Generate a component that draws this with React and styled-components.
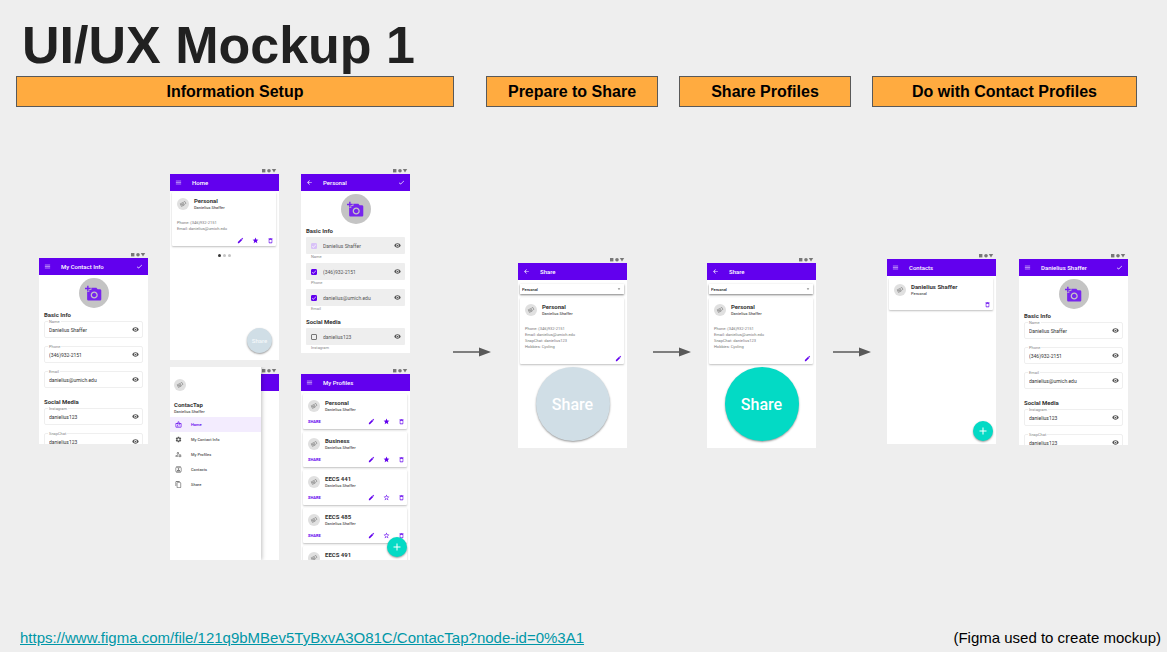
import React, { useId } from "react";
import styled, { createGlobalStyle, css } from "styled-components";
import {
  MdMenu, MdCheck, MdArrowBack, MdAddAPhoto, MdEdit, MdStar, MdStarBorder,
  MdDeleteOutline, MdVisibility, MdAdd, MdArrowDropDown, MdOutlineBadge,
  MdSettings, MdOutlineManageAccounts, MdOutlineContacts, MdContentCopy,
} from "react-icons/md";

const purple = "#6200ee";
const teal = "#03dac5";

const GlobalStyle = createGlobalStyle`
  * { box-sizing: border-box; }
  body { margin: 0; background: #eeeeee; }
  h1, h2, h3, p, ul { margin: 0; padding: 0; }
  button { font: inherit; color: inherit; background: none; border: 0; padding: 0; cursor: pointer; }
  svg { display: block; flex: none; }
`;

const Page = styled.main`
  min-height: 100vh;
  display: flex;
  flex-direction: column;
  background: #eeeeee;
  color: #000;
  font-family: "Liberation Sans", Arial, sans-serif;
`;

const Title = styled.h1`
  padding: 15px 22px 1px;
  font-size: 52px;
  line-height: 60px;
  font-weight: 700;
  color: #212121;
`;

const Stages = styled.div`
  display: grid;
  grid-template-columns: 449fr 172fr 172fr 265fr;
  column-gap: 21px;
  padding: 0 30px 0 16px;
`;

const Stage = styled.h2`
  margin-right: ${(p) => (p.$wide ? "11px" : "0")};
  border: 1px solid #595959;
  background: #ffab40;
  font-size: 16px;
  line-height: 29px;
  font-weight: 700;
  text-align: center;
  white-space: nowrap;
`;

const Board = styled.section`
  display: flex;
  align-items: flex-start;
  margin-top: 60px;
  padding: 0 39px;
  font-family: Roboto, sans-serif;
`;

const Group = styled.div`
  display: flex;
  align-items: flex-start;
  gap: ${(p) => p.$gap}px;
`;

const Column = styled.div`
  flex: none;
  width: 109px;
  display: flex;
  flex-direction: column;
  gap: ${(p) => p.$gap || 0}px;
  padding-top: ${(p) => p.$drop || 0}px;
`;

const ArrowCell = styled.div`
  flex: ${(p) => p.$share} 1 0;
  display: flex;
  justify-content: center;
  padding-top: 180px;
  padding-left: ${(p) => p.$lead || 0}px;
`;

const StatusBar = styled.div`
  height: 7px;
  display: flex;
  justify-content: flex-end;
  align-items: center;
  padding-right: 2px;
`;

const Body = styled.div`
  position: relative;
  height: ${(p) => p.$height}px;
  overflow: hidden;
  background: #fff;
`;

const AppBar = styled.header`
  height: 17px;
  display: flex;
  align-items: center;
  gap: 10px;
  padding: 0 5px;
  background: ${purple};
  color: #fff;
  font-size: 6px;
`;

const BarTitle = styled.h3`
  flex: 1;
  font-size: 6px;
  line-height: 8px;
  font-weight: 500;
  white-space: nowrap;
`;

const Form = styled.div`
  padding: 3px 5px 0;
`;

const PhotoButton = styled.button`
  && {
    width: 30px;
    height: 30px;
    margin: 0 auto;
    display: flex;
    align-items: center;
    justify-content: center;
    border-radius: 50%;
    background: #c4c4c4;
    color: #7724ee;
  }
`;

const SectionTitle = styled.h3`
  margin: ${(p) => p.$top}px 0 1px;
  font-size: 6px;
  line-height: 10px;
  font-weight: 700;
  color: #333;
`;

const OutlinedField = styled.div`
  position: relative;
  height: 17px;
  margin-bottom: 8px;
  display: flex;
  align-items: center;
  padding: 0 3px 0 4px;
  border: 1px solid #efefef;
  border-radius: 2px;
`;

const FloatingLabel = styled.label`
  position: absolute;
  top: -3px;
  left: 3px;
  padding: 0 1px;
  background: #fff;
  color: #888;
  font-size: 4px;
  line-height: 5px;
`;

const TextInput = styled.input`
  flex: 1;
  min-width: 0;
  height: 8px;
  padding: 0;
  border: 0;
  background: transparent;
  color: ${(p) => (p.$muted ? "#555" : "#333")};
  font-family: Roboto, sans-serif;
  font-size: 5px;
  line-height: 8px;
`;

const EyeButton = styled.button`
  && { color: #555; }
`;

const FilledField = styled.div`
  height: 17px;
  display: flex;
  align-items: center;
  gap: 5px;
  padding: 0 4px 0 5px;
  background: #eeeeee;
  border-radius: 1px;
`;

const HelperLabel = styled.label`
  display: block;
  height: 9px;
  padding-left: 5px;
  font-size: 4px;
  line-height: 6px;
  color: #888;
`;

const Tick = styled.span`
  position: relative;
  width: 6px;
  height: 6px;
  margin-right: 1px;
  color: #fff;
  svg { position: absolute; inset: 0; pointer-events: none; }
`;

const TickBox = styled.input`
  appearance: none;
  display: block;
  width: 6px;
  height: 6px;
  margin: 0;
  border: 1px solid #777;
  border-radius: 1px;
  &:checked { background: ${purple}; border-color: ${purple}; }
  &:disabled { background: #d9c2f7; border-color: #d9c2f7; }
`;

const Cards = styled.div`
  display: flex;
  flex-direction: column;
  gap: 3px;
  padding: ${(p) => p.$top}px 3px 0 2px;
`;

const Card = styled.article`
  padding: 5px 2px ${(p) => p.$bottom || 1}px 5px;
  border-radius: 1px;
  background: #fff;
  box-shadow: 0 1px 2px rgba(0, 0, 0, 0.25);
`;

const CardHead = styled.div`
  display: flex;
  align-items: center;
  gap: 5px;
`;

const AvatarDisc = styled.span`
  flex: none;
  width: 12px;
  height: 12px;
  display: flex;
  align-items: center;
  justify-content: center;
  border-radius: 50%;
  background: #e0e0e0;
`;

const Name = styled.h3`
  font-size: 6px;
  line-height: 7px;
  font-weight: 700;
  color: #333;
  white-space: nowrap;
`;

const Sub = styled.p`
  min-height: 7px;
  font-size: 4px;
  line-height: 7px;
  font-weight: 500;
  color: #555;
`;

const Details = styled.div`
  margin-top: 9px;
  font-size: 4px;
  line-height: 6px;
  color: #777;
`;

const Actions = styled.div`
  height: 9px;
  margin-top: ${(p) => p.$top}px;
  display: flex;
  align-items: center;
  justify-content: flex-end;
  gap: 8px;
  color: ${purple};
`;

const ShareLink = styled.button`
  && { margin-right: auto; font-size: 4px; font-weight: 700; }
`;

const Dots = styled.div`
  display: flex;
  justify-content: center;
  gap: 2px;
  margin: 8px 0 0;
`;

const Dot = styled.span`
  width: 3px;
  height: 3px;
  border-radius: 50%;
  background: ${(p) => (p.$on ? "#333" : "#c4c4c4")};
`;

const round = css`
  display: flex;
  align-items: center;
  justify-content: center;
  border-radius: 50%;
  box-shadow: 0 1px 2px rgba(0, 0, 0, 0.4);
`;

const Fab = styled.button`
  && {
    ${round}
    position: absolute;
    right: 3px;
    bottom: 3px;
    width: 20px;
    height: 20px;
    color: #fff;
    background: ${teal};
  }
`;

const ShareFab = styled.button`
  && {
    ${round}
    position: absolute;
    right: 7px;
    bottom: 7px;
    width: 25px;
    height: 25px;
    color: #f4f8fa;
    background: #d0dee6;
    font-size: 6px;
    font-weight: 500;
  }
`;

const BigShare = styled.button`
  && {
    ${round}
    width: 74px;
    height: 74px;
    margin: 3px auto 0;
    color: #fff;
    background: ${(p) => (p.$active ? teal : "#d0dee6")};
    font-size: 16px;
    font-weight: 500;
  }
`;

const SelectBox = styled.div`
  position: relative;
  margin: 4px 3px 0 2px;
  box-shadow: 0 1px 2px rgba(0, 0, 0, 0.5);
  svg { position: absolute; right: 2px; top: 2px; color: #555; pointer-events: none; }
`;

const Select = styled.select`
  appearance: none;
  display: block;
  width: 100%;
  height: 10px;
  padding: 0 2px;
  border: 0;
  border-radius: 0;
  background: #fff;
  color: #222;
  font-family: Roboto, sans-serif;
  font-size: 4px;
  font-weight: 500;
`;

const DrawerPhone = styled.div`
  display: flex;
  height: 193px;
  overflow: hidden;
`;

const Drawer = styled.nav`
  position: relative;
  z-index: 1;
  width: 92px;
  padding-top: 12px;
  background: #fff;
  box-shadow: 1px 0 4px rgba(0, 0, 0, 0.25);
`;

const DrawerHead = styled.div`
  padding: 0 4px;
  ${Name} { margin-top: 10px; }
`;

const NavList = styled.ul`
  margin-top: 2px;
  list-style: none;
`;

const NavLink = styled.a`
  height: 15px;
  display: flex;
  align-items: center;
  gap: 9px;
  padding: 0 5px;
  font-size: 4px;
  font-weight: 500;
  text-decoration: none;
  color: ${(p) => (p.$on ? purple : "#555")};
  background: ${(p) => (p.$on ? "#f3ecfe" : "transparent")};
`;

const Behind = styled.div`
  flex: 1;
  display: flex;
  flex-direction: column;
`;

const Blank = styled.div`
  flex: 1;
  background: #fff;
`;

const Footer = styled.footer`
  display: flex;
  justify-content: space-between;
  margin-top: auto;
  padding: 0 6px 4px 20px;
  font-size: 15px;
  line-height: 20px;
`;

const SourceLink = styled.a`
  color: #0097a7;
`;

function StatusIcons() {
  return (
    <StatusBar>
      <svg width="16" height="5" viewBox="0 0 16 5" fill="#777" aria-hidden="true">
        <rect x="1" y="1" width="3.4" height="3.4" />
        <circle cx="8" cy="2.7" r="1.8" />
        <path d="M10.8 1h4.4L13 4.6z" />
      </svg>
    </StatusBar>
  );
}

function Phone({ title, back, confirm, height = 186, children }) {
  const Lead = back ? MdArrowBack : MdMenu;
  return (
    <div>
      <StatusIcons />
      <Body $height={height}>
        <AppBar>
          <button type="button" aria-label={back ? "Back" : "Menu"}><Lead size={7} /></button>
          <BarTitle>{title}</BarTitle>
          {confirm && <button type="button" aria-label="Save"><MdCheck size={7} /></button>}
        </AppBar>
        {children}
      </Body>
    </div>
  );
}

function Avatar() {
  return (
    <AvatarDisc>
      <svg width="8" height="8" viewBox="0 0 16 16" fill="none" stroke="#777" strokeWidth="1.2" aria-hidden="true">
        <path d="M2.5 7.5 8 5.2l2.2 5.2-5.4 2.3zM8.5 4.8l3-2 2.3 3.8-3.2 2.2" />
        <circle cx="6.4" cy="9" r="1.2" />
      </svg>
    </AvatarDisc>
  );
}

function Photo() {
  return <PhotoButton type="button" aria-label="Add photo"><MdAddAPhoto size={17} /></PhotoButton>;
}

function Eye() {
  return <EyeButton type="button" aria-label="Visibility"><MdVisibility size={7} /></EyeButton>;
}

function Outlined({ label, value }) {
  const id = useId();
  return (
    <OutlinedField>
      <FloatingLabel htmlFor={id}>{label}</FloatingLabel>
      <TextInput id={id} defaultValue={value} />
      <Eye />
    </OutlinedField>
  );
}

function Filled({ label, value, checked = true, disabled }) {
  const id = useId();
  return (
    <>
      <FilledField>
        <Tick>
          <TickBox type="checkbox" aria-label={"Include " + label} defaultChecked={checked} disabled={disabled} />
          {checked && <MdCheck size={6} />}
        </Tick>
        <TextInput id={id} $muted defaultValue={value} />
        <Eye />
      </FilledField>
      <HelperLabel htmlFor={id}>{label}</HelperLabel>
    </>
  );
}

function ContactForm({ title }) {
  return (
    <Phone title={title} confirm>
      <Form>
        <Photo />
        <SectionTitle $top={2}>Basic Info</SectionTitle>
        <Outlined label="Name" value="Danielius Shaffer" />
        <Outlined label="Phone" value="(346)932-2151" />
        <Outlined label="Email" value="danielius@umich.edu" />
        <SectionTitle $top={9}>Social Media</SectionTitle>
        <Outlined label="Instagram" value="danielius123" />
        <Outlined label="SnapChat" value="danielius123" />
      </Form>
    </Phone>
  );
}

function Person({ name, sub }) {
  return (
    <CardHead>
      <Avatar />
      <div>
        <Name>{name}</Name>
        <Sub>{sub}</Sub>
      </div>
    </CardHead>
  );
}

const Edit = () => <button type="button" aria-label="Edit"><MdEdit size={7} /></button>;
const Trash = () => <button type="button" aria-label="Delete"><MdDeleteOutline size={7} /></button>;
const Favourite = ({ on }) => (
  <button type="button" aria-label="Favourite">{on ? <MdStar size={7} /> : <MdStarBorder size={7} />}</button>
);

function HomePhone() {
  return (
    <Phone title="Home">
      <Cards $top={1}>
        <Card>
          <Person name="Personal" sub="Danielius Shaffer" />
          <Details>
            <p>Phone: (346)932-2151</p>
            <p>Email: danielius@umich.edu</p>
          </Details>
          <Actions $top={4}><Edit /><Favourite on /><Trash /></Actions>
        </Card>
      </Cards>
      <Dots><Dot $on /><Dot /><Dot /></Dots>
      <ShareFab type="button">Share</ShareFab>
    </Phone>
  );
}

const navItems = [
  ["Home", MdOutlineBadge],
  ["My Contact Info", MdSettings],
  ["My Profiles", MdOutlineManageAccounts],
  ["Contacts", MdOutlineContacts],
  ["Share", MdContentCopy],
];

function DrawerScreen() {
  return (
    <DrawerPhone>
      <Drawer>
        <DrawerHead>
          <Avatar />
          <Name>ContacTap</Name>
          <Sub>Danielius Shaffer</Sub>
        </DrawerHead>
        <NavList>
          {navItems.map(([label, Icon], i) => (
            <li key={label}><NavLink href="#" $on={i === 0}><Icon size={7} />{label}</NavLink></li>
          ))}
        </NavList>
      </Drawer>
      <Behind>
        <StatusIcons />
        <AppBar />
        <Blank />
      </Behind>
    </DrawerPhone>
  );
}

const profiles = [
  { name: "Personal", starred: true },
  { name: "Business", starred: true },
  { name: "EECS 441" },
  { name: "EECS 485" },
  { name: "EECS 491", peek: true },
];

function ProfilesPhone() {
  return (
    <Phone title="My Profiles">
      <Cards $top={3}>
        {profiles.map(({ name, starred, peek }) => (
          <Card key={name} $bottom={3}>
            <Person name={name} sub={peek ? null : "Danielius Shaffer"} />
            {!peek && (
              <Actions $top={4}>
                <ShareLink type="button">SHARE</ShareLink>
                <Edit /><Favourite on={starred} /><Trash />
              </Actions>
            )}
          </Card>
        ))}
      </Cards>
      <Fab type="button" aria-label="Add"><MdAdd size={12} /></Fab>
    </Phone>
  );
}

function SharePhone({ active }) {
  return (
    <Phone title="Share" back height={185}>
      <SelectBox>
        <Select aria-label="Profile" defaultValue="Personal"><option>Personal</option></Select>
        <MdArrowDropDown size={6} />
      </SelectBox>
      <Cards $top={4}>
        <Card>
          <Person name="Personal" sub="Danielius Shaffer" />
          <Details>
            <p>Phone: (346)932-2151</p>
            <p>Email: danielius@umich.edu</p>
            <p>SnapChat: danielius123</p>
            <p>Hobbies: Cycling</p>
          </Details>
          <Actions $top={4}><Edit /></Actions>
        </Card>
      </Cards>
      <BigShare type="button" $active={active}>Share</BigShare>
    </Phone>
  );
}

function Arrow({ share, lead }) {
  return (
    <ArrowCell $share={share} $lead={lead}>
      <svg width="38" height="10" viewBox="0 0 38 10" fill="#595959" aria-hidden="true">
        <path d="M0 4.3h27v1.4H0zM26 .6 38 5 26 9.4z" />
      </svg>
    </ArrowCell>
  );
}

export default function App() {
  return (
    <Page>
      <GlobalStyle />
      <Title>UI/UX Mockup 1</Title>
      <Stages>
        <Stage $wide>Information Setup</Stage>
        <Stage>Prepare to Share</Stage>
        <Stage>Share Profiles</Stage>
        <Stage>Do with Contact Profiles</Stage>
      </Stages>
      <Board>
        <Group $gap={22}>
          <Column $drop={84}><ContactForm title="My Contact Info" /></Column>
          <Column $gap={7}>
            <HomePhone />
            <DrawerScreen />
          </Column>
          <Column $gap={14}>
            <Phone title="Personal" back confirm height={179}>
              <Form>
                <Photo />
                <SectionTitle $top={2}>Basic Info</SectionTitle>
                <Filled label="Name" value="Danielius Shaffer" disabled />
                <Filled label="Phone" value="(346)932-2151" />
                <Filled label="Email" value="danielius@umich.edu" />
                <SectionTitle $top={2}>Social Media</SectionTitle>
                <Filled label="Instagram" value="danielius123" checked={false} />
              </Form>
            </Phone>
            <ProfilesPhone />
          </Column>
        </Group>
        <Arrow share={93} lead={15} />
        <Column $drop={89}><SharePhone /></Column>
        <Arrow share={71} lead={9} />
        <Column $drop={89}><SharePhone active /></Column>
        <Arrow share={71} />
        <Group $gap={23}>
          <Column $drop={85}>
            <Phone title="Contacts" height={185}>
              <Cards $top={2}>
                <Card>
                  <Person name="Danielius Shaffer" sub="Personal" />
                  <Actions $top={3}><Trash /></Actions>
                </Card>
              </Cards>
              <Fab type="button" aria-label="Add"><MdAdd size={12} /></Fab>
            </Phone>
          </Column>
          <Column $drop={85}><ContactForm title="Danielius Shaffer" /></Column>
        </Group>
      </Board>
      <Footer>
        <SourceLink href="https://www.figma.com/file/121q9bMBev5TyBxvA3O81C/ContacTap?node-id=0%3A1">
          https://www.figma.com/file/121q9bMBev5TyBxvA3O81C/ContacTap?node-id=0%3A1
        </SourceLink>
        <span>(Figma used to create mockup)</span>
      </Footer>
    </Page>
  );
}
